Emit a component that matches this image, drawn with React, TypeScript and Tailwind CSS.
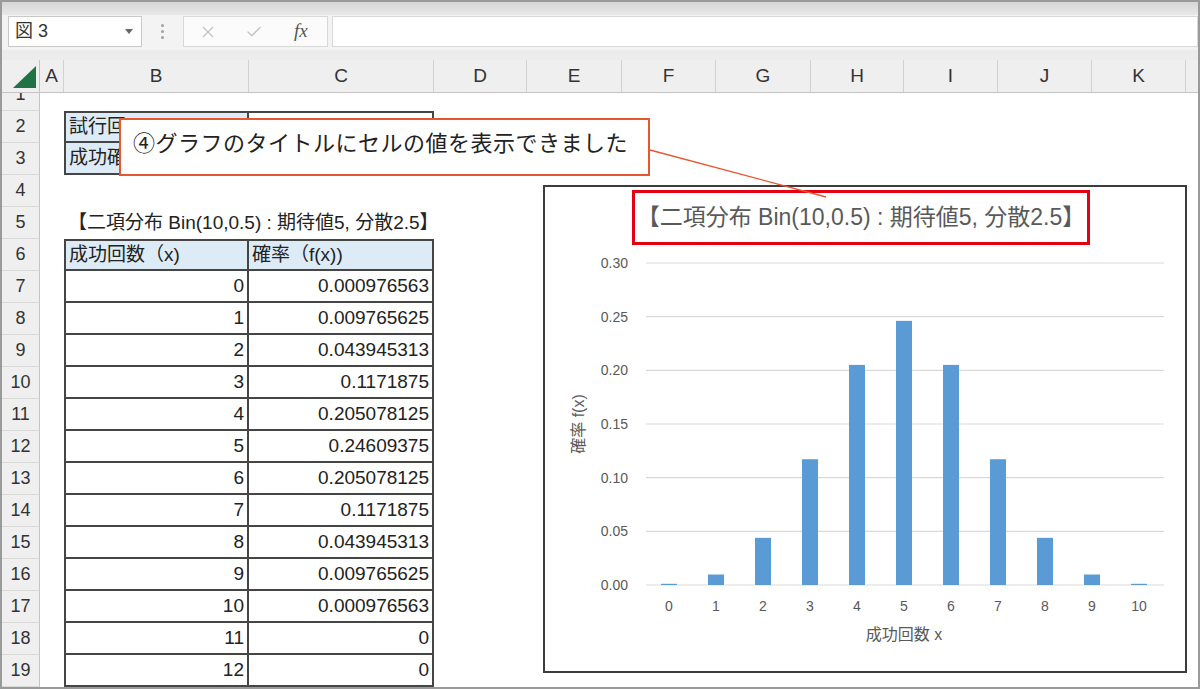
import { X, Check } from "lucide-react";

const FONT = "'Liberation Sans', 'Noto Sans CJK JP', sans-serif";
const TITLE = "【二項分布 Bin(10,0.5) : 期待値5, 分散2.5】";

const probs = [
  "0.000976563",
  "0.009765625",
  "0.043945313",
  "0.1171875",
  "0.205078125",
  "0.24609375",
  "0.205078125",
  "0.1171875",
  "0.043945313",
  "0.009765625",
  "0.000976563",
  "0",
  "0",
];

// widths of the columns after C, in px
const rightCols = [
  { l: "D", w: 93 },
  { l: "E", w: 95 },
  { l: "F", w: 94 },
  { l: "G", w: 95 },
  { l: "H", w: 93 },
  { l: "I", w: 94 },
  { l: "J", w: 94 },
  { l: "K", w: 94 },
];

function RowHead({ n }: { n: number }) {
  return (
    <div className="w-[38px] shrink-0 h-full bg-[#efefef] border-r border-b border-r-[#c4c4c4] border-b-[#d9d9d9] flex items-center justify-center text-[18px] text-[#333]">
      {n}
    </div>
  );
}

function Row({ n, children }: { n: number; children?: React.ReactNode }) {
  return (
    <div className="flex h-[32px]">
      <RowHead n={n} />
      <div className="w-[24px] shrink-0" />
      {children}
    </div>
  );
}

const cellB = "w-[185px] shrink-0 h-full border-2 border-t-0 border-[#454545] flex items-center px-[3px] text-[19px] text-[#222] whitespace-nowrap overflow-hidden";
const cellC = "w-[185px] shrink-0 h-full border-2 border-t-0 border-l-0 border-[#454545] flex items-center px-[3px] text-[19px] text-[#222] whitespace-nowrap overflow-hidden";

function Chart() {
  const y0 = 340;
  const k = 1073.3;
  const ticks = ["0.30", "0.25", "0.20", "0.15", "0.10", "0.05", "0.00"];
  return (
    <div className="absolute left-[541px] top-[183px] w-[644px] h-[488px] border-2 border-[#3c3c3c] bg-white flex flex-col">
      <div className="ml-[87px] mt-[3px] w-[458px] h-[55px] border-[3px] border-[#e50012] flex items-center justify-center text-[23px] text-[#595959] whitespace-nowrap">
        {TITLE}
      </div>
      <svg width="640" height="426" className="block" style={{ fontFamily: FONT }}>
        {ticks.map((t, i) => {
          const y = 18 + i * 53.67;
          return (
            <g key={t}>
              <line x1="101" x2="619" y1={y} y2={y} stroke="#d9d9d9" strokeWidth="1.2" />
              <text x="83" y={y + 5} textAnchor="end" fontSize="14" fill="#595959">
                {t}
              </text>
            </g>
          );
        })}
        {probs.slice(0, 11).map((p, i) => {
          const h = Math.max(parseFloat(p) * k, 1.2);
          const cx = 124 + i * 47;
          return (
            <g key={i}>
              <rect x={cx - 8} y={y0 - h} width="16" height={h} fill="#5b9bd5" />
              <text x={cx} y="366" textAnchor="middle" fontSize="14" fill="#595959">
                {i}
              </text>
            </g>
          );
        })}
        <text x="359" y="395" textAnchor="middle" fontSize="16" fill="#595959">
          成功回数 x
        </text>
        <text
          x="0"
          y="0"
          transform="translate(39 179) rotate(-90)"
          textAnchor="middle"
          fontSize="16"
          fill="#595959"
        >
          確率 f(x)
        </text>
      </svg>
    </div>
  );
}

function App() {
  return (
    <div
      className="relative w-[1200px] h-[689px] overflow-hidden bg-white border-2 border-[#9a9a9a]"
      style={{ fontFamily: FONT }}
    >
      {/* window strip */}
      <div className="h-[13px] bg-gradient-to-b from-[#d6d6d6] to-[#e8e8e8]" />

      {/* formula bar */}
      <div className="h-[35px] bg-[#f3f3f3] flex items-start pt-[1px]">
        <div className="ml-[6px] w-[134px] h-[31px] bg-white border border-[#c8c8c8] flex items-center justify-between pl-[6px] pr-[8px]">
          <span className="text-[18px] text-[#333]">図 3</span>
          <span className="w-0 h-0 border-l-[4px] border-r-[4px] border-t-[5px] border-l-transparent border-r-transparent border-t-[#666]" />
        </div>
        <div className="ml-[18px] w-[4px] h-[31px] flex flex-col items-center justify-center gap-[3px]">
          <span className="w-[3px] h-[3px] rounded-full bg-[#a0a0a0]" />
          <span className="w-[3px] h-[3px] rounded-full bg-[#a0a0a0]" />
          <span className="w-[3px] h-[3px] rounded-full bg-[#a0a0a0]" />
        </div>
        <div className="ml-[19px] w-[145px] h-[31px] bg-[#fbfbfb] border border-[#d8d8d8] flex items-center">
          <X className="ml-[15px] w-[18px] h-[18px] text-[#c2c2c2]" strokeWidth={1.6} />
          <Check className="ml-[28px] w-[18px] h-[18px] text-[#c2c2c2]" strokeWidth={1.8} />
          <span className="ml-[31px] text-[19px] italic text-[#555]" style={{ fontFamily: "'Liberation Serif', serif" }}>
            fx
          </span>
        </div>
        <div className="ml-[4px] flex-1 h-[31px] bg-white border border-[#d8d8d8]" />
      </div>
      <div className="h-[10px] bg-[#ececec]" />

      {/* column headers */}
      <div className="flex h-[33px] bg-[#efefef] border-b border-[#c4c4c4] text-[19px] text-[#333]">
        <div className="w-[38px] shrink-0 border-r border-[#c4c4c4] relative">
          <svg width="38" height="33" className="absolute inset-0">
            <polygon points="11,28 34,28 34,6" fill="#217346" />
          </svg>
        </div>
        <div className="w-[24px] shrink-0 border-r border-[#d2d2d2] flex items-center justify-center">A</div>
        <div className="w-[185px] shrink-0 border-r border-[#d2d2d2] flex items-center justify-center">B</div>
        <div className="w-[185px] shrink-0 border-r border-[#d2d2d2] flex items-center justify-center">C</div>
        {rightCols.map((c) => (
          <div key={c.l} style={{ width: c.w }} className="shrink-0 border-r border-[#d2d2d2] flex items-center justify-center">
            {c.l}
          </div>
        ))}
        <div className="flex-1" />
      </div>

      {/* row 1, scrolled half out of view */}
      <div className="flex h-[18px]">
        <div className="w-[38px] shrink-0 h-full bg-[#efefef] border-r border-b border-r-[#c4c4c4] border-b-[#d9d9d9] overflow-hidden flex justify-center">
          <span className="text-[18px] text-[#333] leading-[32px] -mt-[15px]">1</span>
        </div>
      </div>

      <Row n={2}>
        <div className={`${cellB} border-t-2 bg-[#ddebf7]`}>試行回</div>
        <div className={`${cellC} border-t-2`} />
      </Row>
      <Row n={3}>
        <div className={`${cellB} bg-[#ddebf7]`}>成功確</div>
        <div className={cellC} />
      </Row>
      <Row n={4} />
      <Row n={5}>
        <div className="flex items-center pl-[4px] text-[19px] text-[#222] whitespace-nowrap">{TITLE}</div>
      </Row>
      <Row n={6}>
        <div className={`${cellB} border-t-2 bg-[#ddebf7]`}>成功回数（x)</div>
        <div className={`${cellC} border-t-2 bg-[#ddebf7]`}>確率（f(x))</div>
      </Row>
      {probs.map((p, i) => (
        <Row key={i} n={7 + i}>
          <div className={`${cellB} justify-end`}>{i}</div>
          <div className={`${cellC} justify-end`}>{p}</div>
        </Row>
      ))}

      <Chart />

      {/* callout connector */}
      <svg width="1200" height="689" className="absolute left-0 top-0 pointer-events-none">
        <line x1="648" y1="148" x2="824" y2="195" stroke="#e8562f" strokeWidth="1.3" />
      </svg>

      {/* callout */}
      <div className="absolute left-[117px] top-[116px] w-[531px] h-[58px] bg-white border-2 border-[#e3582f] pl-[12px] pt-[5px] text-[22px] tracking-[0.5px] text-[#222] whitespace-nowrap" style={{ fontFamily: "'Noto Sans CJK JP', sans-serif" }}>
        ④グラフのタイトルにセルの値を表示できました
      </div>
    </div>
  );
}

export default App;
